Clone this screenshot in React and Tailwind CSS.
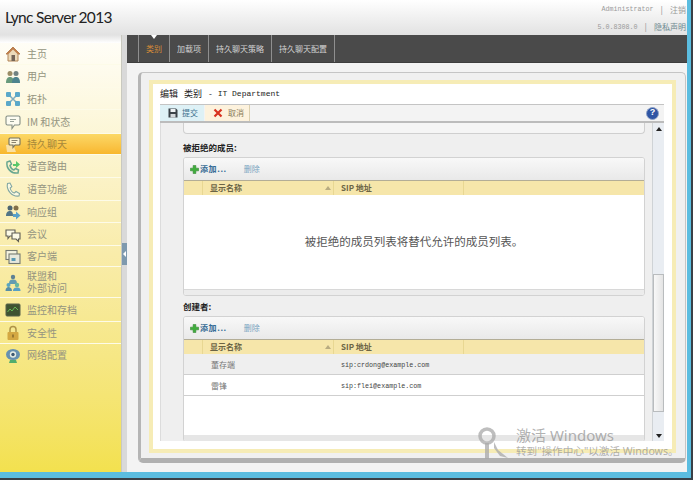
import React from 'react';

const cjk = "font-['Noto_Sans_CJK_SC','Noto_Sans',sans-serif]";
const mono = "font-['Liberation_Mono','Noto_Sans_CJK_SC',monospace]";

// Sidebar icons
const HomeIcon = () => (
  <svg width="16" height="16" viewBox="0 0 16 16">
    <path d="M8 1 L15 8 L13 8 L13 15 L3 15 L3 8 L1 8 Z" fill="#e8d4b0" stroke="#a5703c" strokeWidth="1" />
    <path d="M8 1 L15 8 L12.5 8 L8 3.5 L3.5 8 L1 8 Z" fill="#b5692f" />
    <rect x="6.5" y="9" width="3.5" height="6" fill="#5b4a3c" />
  </svg>
);
const UsersIcon = () => (
  <svg width="16" height="16" viewBox="0 0 16 16">
    <circle cx="5" cy="4.5" r="2.5" fill="#8a7a4f" />
    <circle cx="11" cy="4.5" r="2.5" fill="#5a6f70" />
    <path d="M1 14 C1 9 3 8 5 8 C7 8 9 9 9 14 Z" fill="#4f8a6a" />
    <path d="M7 14 C7 9 9 8 11 8 C13 8 15 9 15 14 Z" fill="#2f6f7f" />
  </svg>
);
const TopologyIcon = () => (
  <svg width="16" height="16" viewBox="0 0 16 16">
    <path d="M3 3 L13 13 M13 3 L3 13" stroke="#6a9fb8" strokeWidth="1.5" />
    <rect x="1" y="1" width="5" height="5" rx="1" fill="#3f9bc6" />
    <rect x="10" y="1" width="5" height="5" rx="1" fill="#3f9bc6" />
    <rect x="1" y="10" width="5" height="5" rx="1" fill="#3f9bc6" />
    <rect x="10" y="10" width="5" height="5" rx="1" fill="#3f9bc6" />
  </svg>
);
const BubbleIcon = () => (
  <svg width="16" height="16" viewBox="0 0 16 16">
    <path d="M2.5 2 H13.5 A1.5 1.5 0 0 1 15 3.5 V9.5 A1.5 1.5 0 0 1 13.5 11 H9.5 L7 14.5 V11 H2.5 A1.5 1.5 0 0 1 1 9.5 V3.5 A1.5 1.5 0 0 1 2.5 2 Z" fill="#fdfdf6" stroke="#6f7c76" strokeWidth="1.1" />
    <path d="M5 5.5 H11 M5 7.5 H9" stroke="#7d8a84" strokeWidth="0.9" />
  </svg>
);
const ChatIcon = () => (
  <svg width="16" height="16" viewBox="0 0 16 16">
    <path d="M1 8 L8 7 L11 15 L2 15 Z" fill="#fbe7b5" />
    <path d="M5 1 H14 A1 1 0 0 1 15 2 V7 A1 1 0 0 1 14 8 H10 L8 10.5 V8 H5 A1 1 0 0 1 4 7 V2 A1 1 0 0 1 5 1 Z" fill="#fdfdf0" stroke="#5c6260" strokeWidth="1.1" />
    <path d="M6.5 3.5 H12.5 M6.5 5.5 H11" stroke="#666" strokeWidth="0.9" />
  </svg>
);
const RouteIcon = () => (
  <svg width="16" height="16" viewBox="0 0 16 16">
    <path d="M2 3 C1 9 6 15 13 14 L13.5 11 L10.5 9.5 L9 11 C7 10.5 5.5 8.5 5 6.5 L6.5 5 L5 2 Z" fill="none" stroke="#4f9a86" strokeWidth="1.5" />
    <path d="M8 5 H11 V2 L15 5.5 L11 9 V7 H8 Z" fill="#3cc05a" />
  </svg>
);
const PhoneIcon = () => (
  <svg width="16" height="16" viewBox="0 0 16 16">
    <path d="M2.5 1.5 C1 8 7 15 14 14 L14.5 11.5 L11 9.5 L9.5 11 C7.5 10.5 5.5 8 5.2 6 L6.8 4.6 L5 1 Z" fill="#fbfbe8" stroke="#6d9a9e" strokeWidth="1.1" />
  </svg>
);
const GroupIcon = () => (
  <svg width="16" height="16" viewBox="0 0 16 16">
    <circle cx="5" cy="4" r="2.5" fill="#2f4f66" />
    <circle cx="11" cy="4" r="2.5" fill="#6e5a36" />
    <path d="M1 12 C1 8 3 7 5 7 C7 7 8 8 8 12 Z" fill="#35607f" />
    <path d="M8 10 H11 V7.5 L15.5 11.5 L11 15.5 V13 H8 Z" fill="#3c94cc" />
  </svg>
);
const ConfIcon = () => (
  <svg width="16" height="16" viewBox="0 0 16 16">
    <path d="M1 3 H10 V9 H5 L3 11.5 V9 H1 Z" fill="#fdfdf0" stroke="#444" strokeWidth="1.1" />
    <path d="M7 6 H15 V12 H13.5 V14.5 L11 12 H7 Z" fill="#fdfdf0" stroke="#444" strokeWidth="1.1" />
  </svg>
);
const ClientIcon = () => (
  <svg width="16" height="16" viewBox="0 0 16 16">
    <rect x="1" y="1.5" width="11" height="9" fill="#f5f5ea" stroke="#5f6668" strokeWidth="1.1" />
    <rect x="4" y="5" width="11" height="9.5" fill="#e4e8e6" stroke="#5f6668" strokeWidth="1.1" />
    <rect x="6.5" y="9" width="4" height="3" fill="#3f8bb5" />
  </svg>
);
const FederationIcon = () => (
  <svg width="16" height="18" viewBox="0 0 16 18">
    <circle cx="8" cy="3" r="2.2" fill="#446f92" />
    <path d="M4 10 C4 6 6 5.5 8 5.5 C10 5.5 12 6 12 10 Z" fill="#4b8fb5" />
    <circle cx="3.5" cy="11" r="2" fill="#3f9bc6" />
    <circle cx="12" cy="11" r="2.2" fill="#4fb0a0" />
    <path d="M0.5 17 C0.5 14 2 13 3.5 13 C5 13 7 14 7 17 Z" fill="#3c7fa8" />
    <path d="M8 17 C8 14 10 13.4 12 13.4 C14 13.4 15.5 14 15.5 17 Z" fill="#3c94cc" />
  </svg>
);
const MonitorIcon = () => (
  <svg width="16" height="16" viewBox="0 0 16 16">
    <rect x="1" y="2" width="14" height="12" rx="1" fill="#1f3a20" stroke="#3c4a3c" strokeWidth="1" />
    <path d="M2.5 10 L5 7 L7 9 L10 5 L13 8" fill="none" stroke="#4fb04f" strokeWidth="1" />
  </svg>
);
const LockIcon = () => (
  <svg width="16" height="16" viewBox="0 0 16 16">
    <path d="M5 7 V4.5 A3 3 0 0 1 11 4.5 V7" fill="none" stroke="#a3863c" strokeWidth="1.5" />
    <rect x="2.5" y="7" width="11" height="8" rx="1" fill="#cf9e36" />
    <rect x="7" y="9.5" width="2" height="3" fill="#8a6620" />
  </svg>
);
const NetworkIcon = () => (
  <svg width="16" height="16" viewBox="0 0 16 16">
    <ellipse cx="8" cy="6.5" rx="7" ry="5.5" fill="#4e82b8" />
    <circle cx="8" cy="6.5" r="3.2" fill="#e4eef5" />
    <circle cx="8" cy="6.5" r="1.7" fill="#1c3f6e" />
    <path d="M5 12 H11 L12 15 H4 Z" fill="#35a36a" />
  </svg>
);

const navItems = [
  { label: '主页', icon: HomeIcon, h: 'h-[22px]' },
  { label: '用户', icon: UsersIcon, h: 'h-[23px]' },
  { label: '拓扑', icon: TopologyIcon, h: 'h-[22px]' },
  { label: 'IM 和状态', icon: BubbleIcon, h: 'h-[24px]' },
  { label: '持久聊天', icon: ChatIcon, h: 'h-[21px]', active: true },
  { label: '语音路由', icon: RouteIcon, h: 'h-[23px]' },
  { label: '语音功能', icon: PhoneIcon, h: 'h-[23px]' },
  { label: '响应组', icon: GroupIcon, h: 'h-[22px]' },
  { label: '会议', icon: ConfIcon, h: 'h-[23px]' },
  { label: '客户端', icon: ClientIcon, h: 'h-[21px]' },
  { label: '联盟和\n外部访问', icon: FederationIcon, h: 'h-[31px]' },
  { label: '监控和存档', icon: MonitorIcon, h: 'h-[24px]' },
  { label: '安全性', icon: LockIcon, h: 'h-[22px]' },
  { label: '网络配置', icon: NetworkIcon, h: 'h-[22px]', last: true },
];

const tabs = [
  { label: '类别', w: 'w-[30px]', active: true },
  { label: '加载项', w: 'w-[38px]' },
  { label: '持久聊天策略', w: 'w-[62px]' },
  { label: '持久聊天配置', w: 'w-[62px]' },
];

const Sidebar = () => (
  <div className="w-[122px] shrink-0 flex flex-col bg-gradient-to-b from-[#fffef9] via-[#f9ecaa] to-[#f3e14e] border-r border-[#c9c9c0]">
    <div className="h-[8px] shrink-0 bg-gradient-to-b from-[#e2e2e2] to-white" />
    {navItems.map((item) => {
      const Icon = item.icon;
      return (
        <div
          key={item.label}
          className={`${item.h} shrink-0 flex items-center pl-[3px] gap-[6px] ${item.last ? '' : 'border-b border-[#fdfbe8]'} ${item.active ? 'bg-gradient-to-b from-[#fbd865] to-[#f8b72c] text-[#a8883a]' : 'text-[#949480]'}`}
        >
          <div className="w-[16px] flex justify-center shrink-0 mt-[1px] ml-[2px] opacity-85">
            <Icon />
          </div>
          <span className={`${cjk} text-[10px] leading-[12px] whitespace-pre-line`}>{item.label}</span>
        </div>
      );
    })}
  </div>
);

const PlusIcon = () => (
  <svg width="9" height="9" viewBox="0 0 10 10">
    <path d="M3.5 0.5 H6.5 V3.5 H9.5 V6.5 H6.5 V9.5 H3.5 V6.5 H0.5 V3.5 H3.5 Z" fill="#3fae3c" stroke="#2c7f2c" strokeWidth="0.6" />
  </svg>
);

// Table with its add/delete bar; the rows differ per section
const MemberBox = ({ children, className }) => (
  <div className={`${className} flex flex-col border border-[#d2d2d2] rounded-[3px] overflow-hidden bg-white shrink-0`}>
    <div className="h-[23px] shrink-0 flex items-center pl-[6px] bg-gradient-to-b from-[#f8f8f8] to-[#e9e9e9] border-b border-[#b3ad96]">
      <PlusIcon />
      <span className={`${cjk} ml-[1px] text-[8px] font-bold text-[#336a94] tracking-[0.6px]`}>添加...</span>
      <span className={`${cjk} ml-[17px] text-[8px] text-[#7aa3c0]`}>删除</span>
    </div>
    <div className={`${cjk} h-[14px] shrink-0 flex items-center bg-[#f6e6aa] text-[8px] font-bold text-[#6b6445]`}>
      <div className="w-[19px] h-full border-r border-[#e8d792]" />
      <div className="w-[131px] h-full flex items-center justify-between pl-[7px] pr-[2px] border-r border-[#e8d792]">
        <span>显示名称</span>
        <span className="w-0 h-0 border-x-[3px] border-x-transparent border-b-[4px] border-b-[#b8ab80]" />
      </div>
      <div className="w-[130px] h-full flex items-center pl-[7px] border-r border-[#e8d792]">SIP 地址</div>
    </div>
    {children}
  </div>
);

const Row = ({ name, sip, className }) => (
  <div className={`${className} shrink-0 flex items-center pt-[2px] border-b border-[#cfcfcf]`}>
    <span className={`${cjk} w-[157px] pl-[27px] text-[8px] text-[#777]`}>{name}</span>
    <span className={`${mono} mt-[1px] text-[6.7px] text-[#444]`}>{sip}</span>
  </div>
);

const ScrollBar = () => (
  <div className="w-[12px] shrink-0 flex flex-col bg-[#e9edf2] border-l border-[#cfd3d6]">
    <div className="h-[11px] shrink-0 flex items-center justify-center">
      <span className="w-0 h-0 border-x-[3px] border-x-transparent border-b-[4px] border-b-[#222]" />
    </div>
    <div className="h-[140px] shrink-0" />
    <div className="h-[138px] shrink-0 bg-gradient-to-r from-[#f8f8f8] to-[#e4e4e4] border border-[#b9bcbe]" />
    <div className="flex-1 flex items-end justify-center pb-[3px]">
      <span className="w-0 h-0 border-x-[3px] border-x-transparent border-t-[4px] border-t-[#222]" />
    </div>
  </div>
);

const Panel = () => (
  <div className="flex-1 min-h-0 ml-[11px] mr-[1px] mt-[9px] mb-[9px] flex flex-col bg-[#f0f0f0] border-l-[3px] border-l-[#b5b5b5] border-t border-t-[#c5c5c5] border-r border-r-[#c5c5c5] border-b-[5px] border-b-[#b0b0b0] rounded-[5px] pl-[8px] pr-[9px] pt-[7px] pb-[5px]">
    <div className="flex-1 min-h-0 flex flex-col bg-white border-[4px] border-[#f6ecb6] pl-[7px] pr-[8px] pb-[8px]">
      <div className="h-[20px] shrink-0 flex items-center gap-[6px] text-[#222]">
        <span className={`${cjk} text-[9px]`}>编辑</span>
        <span className={`${cjk} text-[9px]`}>类别</span>
        <span className={`${mono} text-[8px]`}>- IT Department</span>
      </div>
      <div className="h-[19px] shrink-0 flex items-stretch bg-[#f3f3f3] border-t border-[#c4c4c4] border-b-2 border-b-[#bcbcbc]">
        <div className="w-[44px] flex items-center gap-[4px] pl-[8px] bg-[#def1f6]">
          <svg width="10" height="10" viewBox="0 0 10 10">
            <path d="M0.5 0.5 H8 L9.5 2 V9.5 H0.5 Z" fill="#3a4248" />
            <rect x="2.5" y="1" width="5" height="3" fill="#eef2f4" />
            <rect x="2.5" y="6" width="5" height="3.5" fill="#d3d8db" />
          </svg>
          <span className={`${cjk} text-[8px] text-[#3a6f8c]`}>提交</span>
        </div>
        <div className="w-[45px] ml-[1px] flex items-center gap-[5px] pl-[8px] bg-[#fdf2dd] border-r border-[#dccfae]">
          <svg width="10" height="10" viewBox="0 0 10 10">
            <path d="M1.5 1.5 L8.5 8.5 M8.5 1.5 L1.5 8.5" stroke="#d8321f" strokeWidth="2.2" />
          </svg>
          <span className={`${cjk} text-[8px] text-[#8a7a58]`}>取消</span>
        </div>
        <div className="flex-1 flex items-center justify-end pr-[5px]">
          <div className="w-[13px] h-[13px] rounded-full bg-[#2f55a4] border border-[#8fa3c8] flex items-center justify-center text-white text-[9px] font-bold font-['Liberation_Sans',sans-serif]">?</div>
        </div>
      </div>
      <div className="flex-1 min-h-0 flex bg-[#efefef] border-l border-[#dcdcdc]">
        <div className="flex-1 min-w-0 overflow-hidden flex flex-col pl-[22px] pr-[7px]">
          <div className="h-[11px] shrink-0 bg-[#f5f5f5] border border-t-0 border-[#cfcfcf] rounded-b-[4px]" />
          <div className={`${cjk} h-[23px] shrink-0 flex items-end pb-[5px] text-[8.5px] font-bold text-[#222] leading-[10px]`}>被拒绝的成员:</div>
          <MemberBox className="h-[139px]">
            <div className={`${cjk} flex-1 flex items-center justify-center text-[11.5px] text-[#555]`}>被拒绝的成员列表将替代允许的成员列表。</div>
            <div className="h-[6px] shrink-0 bg-[#ececec] border-t border-[#d8d8d8]" />
          </MemberBox>
          <div className={`${cjk} h-[20px] shrink-0 flex items-center text-[8.5px] font-bold text-[#222]`}>创建者:</div>
          <MemberBox className="h-[126px]">
            <Row name="董存端" sip="sip:crdong@example.com" className="h-[21px] bg-[#efefef]" />
            <Row name="雷锋" sip="sip:flei@example.com" className="h-[21px] bg-white" />
            <div className="flex-1" />
            <div className="h-[6px] shrink-0 bg-[#e6e6e6]" />
          </MemberBox>
        </div>
        <ScrollBar />
      </div>
    </div>
  </div>
);

const App = () => {
  return (
    <div className="relative w-[696px] h-[482px] bg-white overflow-hidden">
      <div className="w-[693px] h-[480px] border-r-2 border-b-2 border-[#3a4046]">
        <div className="h-full flex flex-col border-r-4 border-b-[6px] border-[#5bbde0] bg-[#f3f3f3]">
          {/* top bar */}
          <div className="h-[35px] shrink-0 flex items-start justify-between bg-gradient-to-b from-white to-[#e2e2e2]">
            <div className="pl-[5px] pt-[5px] text-[15.5px] leading-[24px] tracking-[-0.7px] text-[#222] font-['Lato',sans-serif]">Lync Server 2013</div>
            <div className="flex flex-col items-end pr-[1px] text-[#9a9a9a]">
              <div className="h-[19px] flex items-center gap-[6px]">
                <span className={`${mono} text-[6.7px]`}>Administrator</span>
                <span className="text-[8px]">|</span>
                <span className={`${cjk} text-[8px]`}>注销</span>
              </div>
              <div className="h-[16px] flex items-center gap-[6px]">
                <span className={`${mono} text-[6.7px]`}>5.0.8308.0</span>
                <span className="text-[8px]">|</span>
                <span className={`${cjk} text-[8px] text-[#6f8990]`}>隐私声明</span>
              </div>
            </div>
          </div>

          <div className="flex-1 min-h-0 flex">
            <Sidebar />
            <div className="w-[5px] shrink-0 flex items-center bg-[#d9d9d9]">
              <div className="w-full h-[22px] flex items-center justify-center bg-[#7e99ae]">
                <span className="w-0 h-0 border-y-[3px] border-y-transparent border-r-[3px] border-r-white" />
              </div>
            </div>
            <div className="flex-1 min-w-0 flex flex-col">
              <div className="h-[28px] shrink-0 flex bg-[#4a4a4a] border-b border-[#3e3e3e]">
                <div className="w-[12px] border-r border-[#8f8f8f]" />
                {tabs.map((tab) => (
                  <div
                    key={tab.label}
                    className={`${tab.w} ${cjk} relative box-content flex items-center justify-center border-r border-[#8f8f8f] text-[8px] ${tab.active ? 'text-[#d58a38]' : 'text-[#d2d2d2]'}`}
                  >
                    {tab.active && (
                      <span className="absolute top-0 left-[12px] w-0 h-0 border-x-[3px] border-x-transparent border-t-[4px] border-t-white" />
                    )}
                    {tab.label}
                  </div>
                ))}
              </div>
              <Panel />
            </div>
          </div>
        </div>
      </div>

      {/* Windows activation watermark */}
      <div className="absolute left-[478px] top-[426px] flex gap-[6px] text-[#8f8f8f]/70 pointer-events-none">
        <svg width="32" height="36" viewBox="0 0 32 36">
          <circle cx="9" cy="10" r="7" fill="none" stroke="#a8a8a8" strokeOpacity="0.75" strokeWidth="3.5" />
          <path d="M9 17 V33" stroke="#a8a8a8" strokeOpacity="0.75" strokeWidth="4" />
          <path d="M16 16 L20 24 L30 32 L22 30 L16 22 Z" fill="#a8a8a8" fillOpacity="0.75" />
        </svg>
        <div className="flex flex-col pt-[1px]">
          <span className="text-[15px] leading-[17px] font-['Noto_Sans','Noto_Sans_CJK_SC',sans-serif]">激活 Windows</span>
          <span className="text-[10.6px] leading-[14px] whitespace-nowrap font-['Noto_Sans','Noto_Sans_CJK_SC',sans-serif]">转到"操作中心"以激活 Windows。</span>
        </div>
      </div>
    </div>
  );
};

export default App;
